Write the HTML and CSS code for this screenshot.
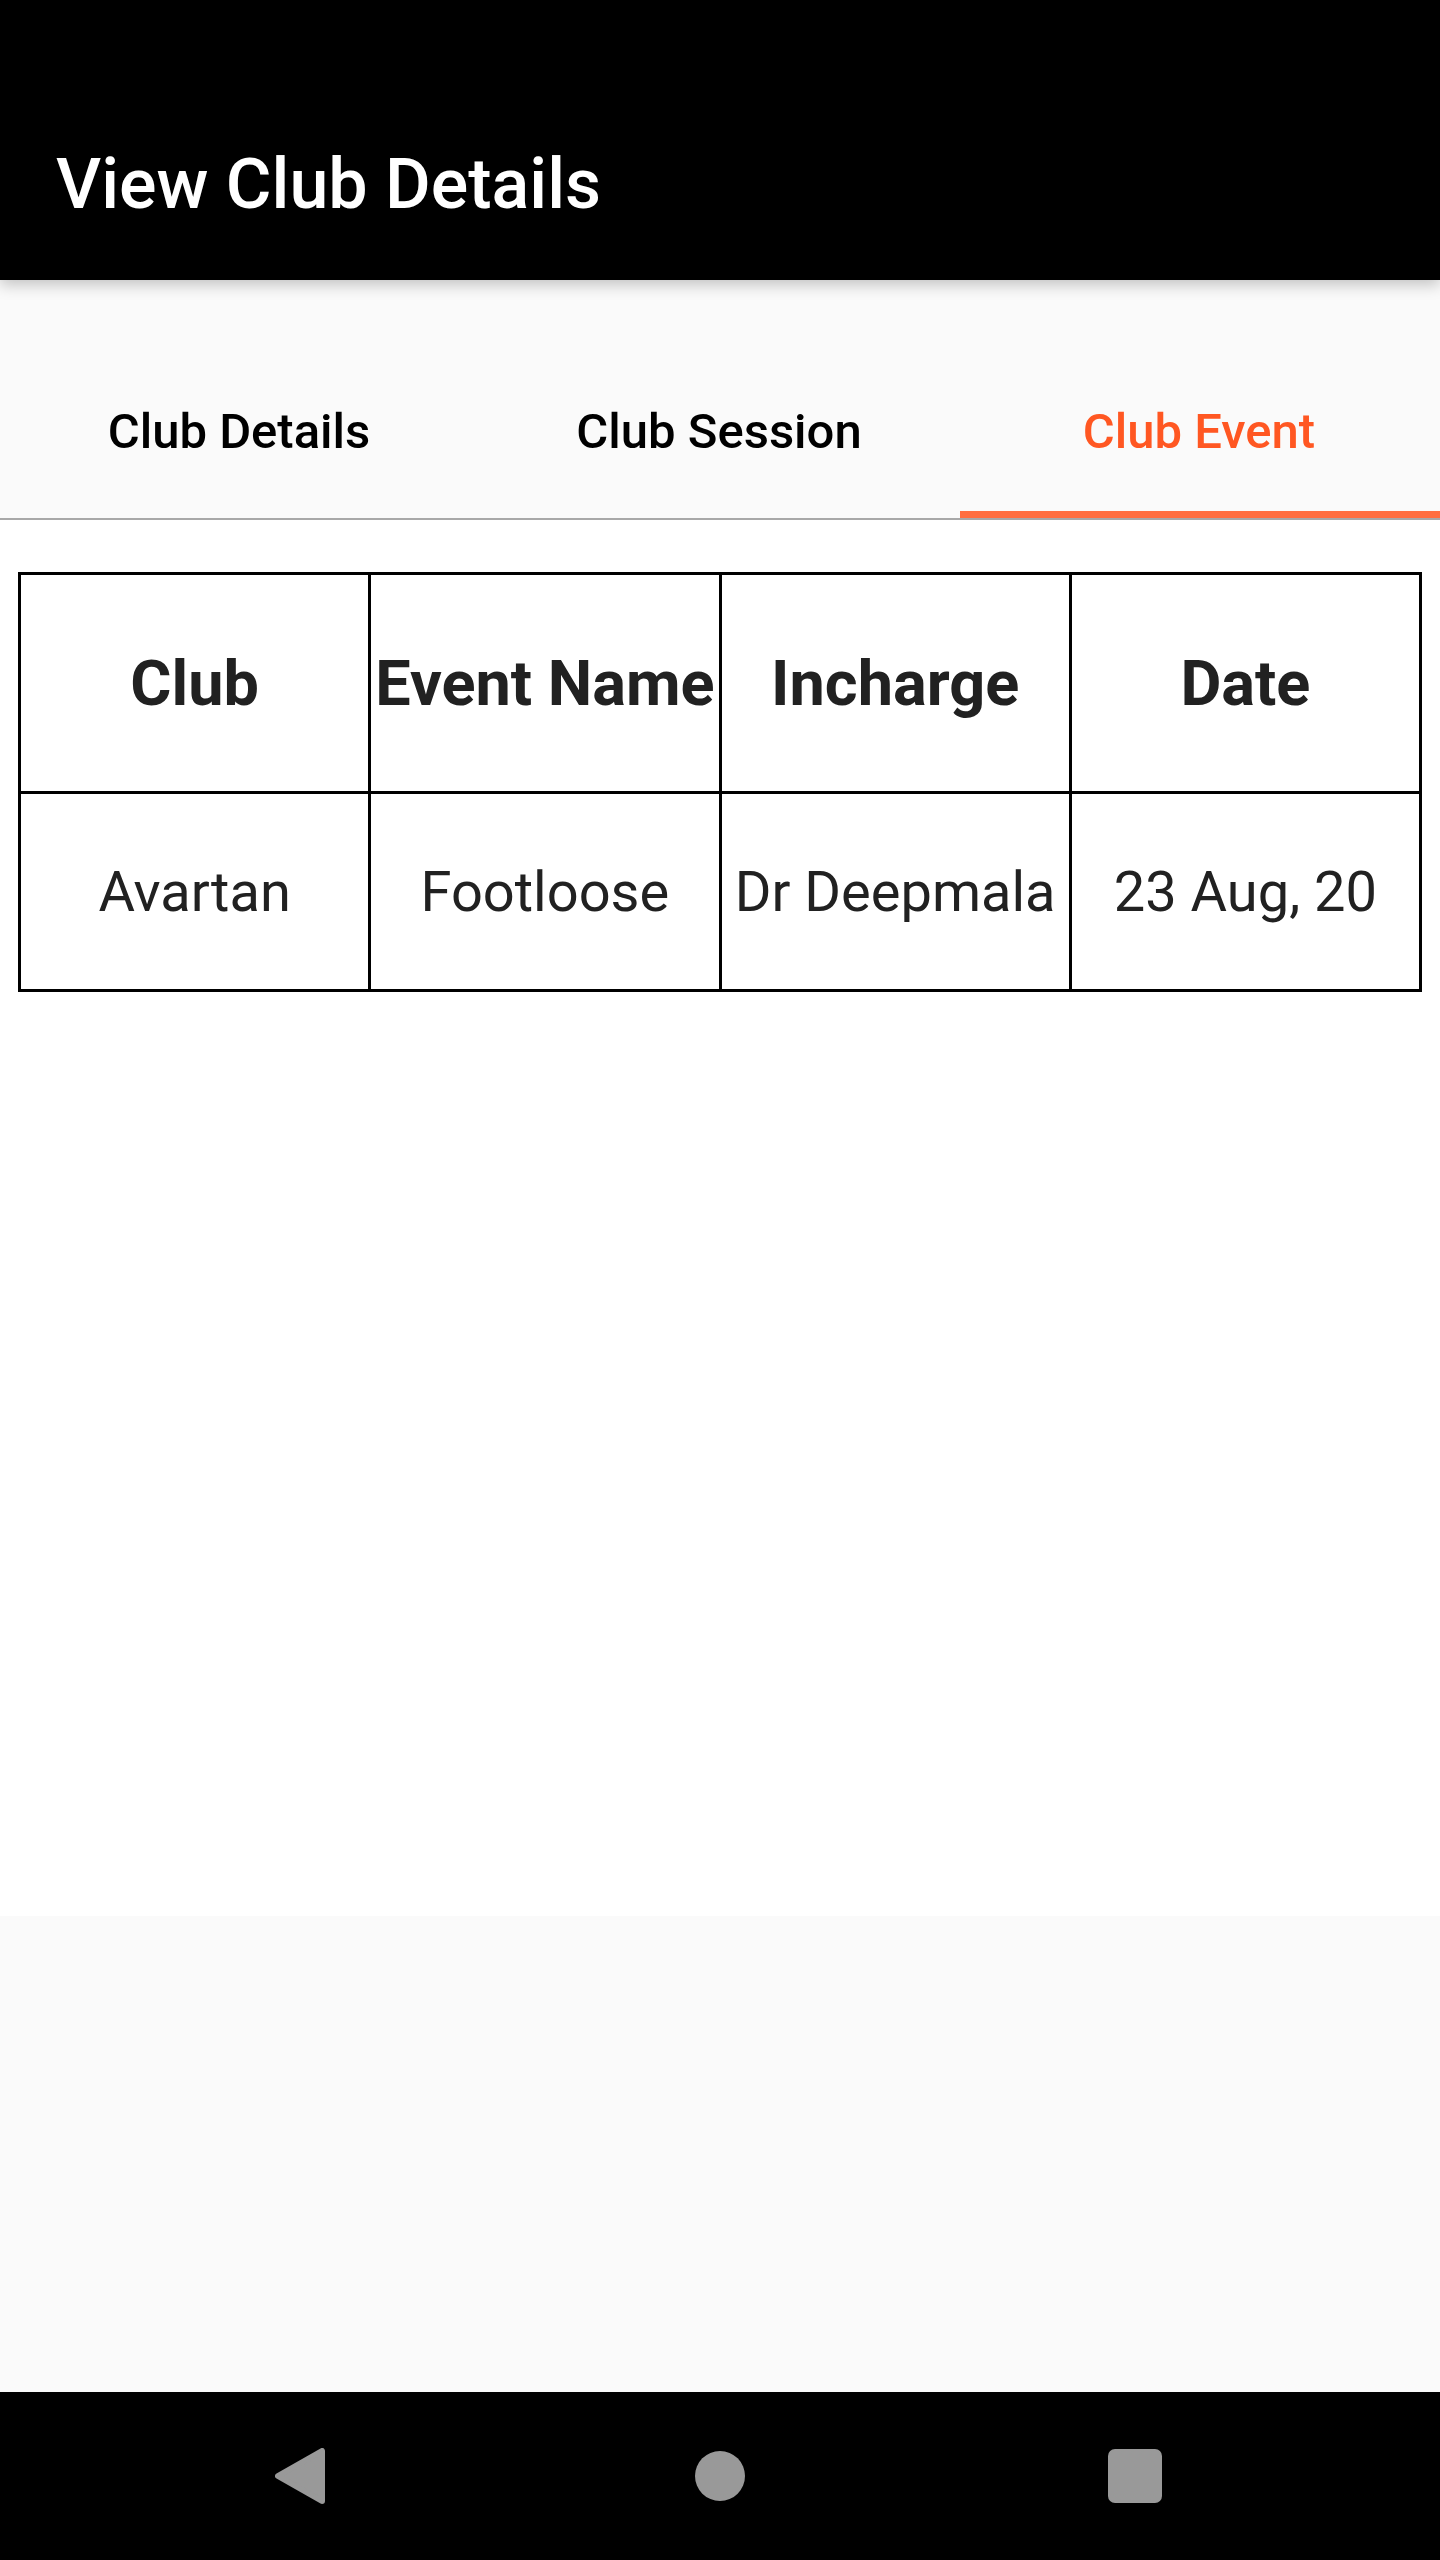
FILE: index.html
```html
<!DOCTYPE html>
<html lang="en">
<head>
<meta charset="utf-8">
<title>View Club Details</title>
<link rel="stylesheet" href="styles.css">
</head>
<body>
<div class="screen">
  <header class="appbar">
    <div class="statusbar"></div>
    <div class="toolbar"><h1 class="title">View Club Details</h1></div>
  </header>
  <nav class="tabs-wrap">
    <div class="tabbar">
      <div class="tab">Club Details</div>
      <div class="tab">Club Session</div>
      <div class="tab tab-active">Club Event</div>
    </div>
  </nav>
  <main class="content">
    <div class="grid-table" role="table">
      <div class="cell head" role="columnheader">Club</div>
      <div class="cell head" role="columnheader">Event Name</div>
      <div class="cell head" role="columnheader">Incharge</div>
      <div class="cell head" role="columnheader">Date</div>
      <div class="cell body" role="cell">Avartan</div>
      <div class="cell body" role="cell">Footloose</div>
      <div class="cell body" role="cell">Dr Deepmala</div>
      <div class="cell body" role="cell">23 Aug, 20</div>
    </div>
  </main>
  <div class="filler"></div>
  <footer class="navbar">
    <div class="navbtn">
      <svg width="50" height="56" viewBox="0 0 50 56"><path d="M47 3 L47 53 L3 28 Z" fill="#999999" stroke="#999999" stroke-width="6" stroke-linejoin="round"/></svg>
    </div>
    <div class="navbtn">
      <svg width="50" height="50" viewBox="0 0 50 50"><circle cx="25" cy="25" r="25" fill="#999999"/></svg>
    </div>
    <div class="navbtn">
      <svg width="54" height="54" viewBox="0 0 54 54"><rect x="0" y="0" width="54" height="54" rx="7" fill="#999999"/></svg>
    </div>
  </footer>
</div>
</body>
</html>
```

FILE: styles.css
```css
* { box-sizing: border-box; }
html, body { margin: 0; padding: 0; }
body {
  font-family: Roboto, "Noto Sans", "Liberation Sans", sans-serif;
  background: #fafafa;
}
.screen {
  width: 1440px;
  height: 2560px;
  display: flex;
  flex-direction: column;
  overflow: hidden;
}
.appbar {
  background: #000;
  height: 280px;
  flex: none;
  display: flex;
  flex-direction: column;
  position: relative;
  z-index: 2;
  box-shadow: 0 5px 14px rgba(0,0,0,0.22);
}
.statusbar { height: 84px; flex: none; }
.toolbar {
  height: 196px;
  display: flex;
  align-items: center;
  padding-left: 56px;
}
.title {
  margin: 0;
  color: #fff;
  font-size: 70px;
  font-weight: 500;
  line-height: 1;
  padding-top: 4px;
}
.tabs-wrap {
  flex: none;
  background: #fafafa;
  padding-top: 70px;
}
.tabbar {
  display: flex;
  height: 170px;
  border-bottom: 2px solid #a8a8a8;
}
.tab {
  flex: 1;
  display: flex;
  align-items: center;
  justify-content: center;
  font-size: 49px;
  font-weight: 500;
  color: #000;
  border-bottom: 7px solid transparent;
  padding-top: 2px;
  padding-right: 2px;
}
.tab-active {
  color: #ff5722;
  border-bottom-color: #ff6e40;
}
.content {
  flex: none;
  height: 1396px;
  background: #fff;
  padding: 52px 18px 0 18px;
}
.grid-table {
  width: 1404px;
  display: grid;
  grid-template-columns: repeat(4, 1fr);
  border-top: 3px solid #000;
  border-left: 3px solid #000;
}
.cell {
  border-right: 3px solid #000;
  border-bottom: 3px solid #000;
  display: flex;
  align-items: center;
  justify-content: center;
  color: #212121;
  white-space: nowrap;
  overflow: hidden;
}
.head {
  height: 219px;
  font-size: 63px;
  font-weight: 700;
}
.body {
  height: 198px;
  font-size: 56px;
  font-weight: 400;
}
.filler {
  flex: 1;
  background: #fafafa;
}
.navbar {
  flex: none;
  height: 168px;
  background: #000;
  display: grid;
  grid-template-columns: 420px 420px 410px;
  padding-left: 90px;
  align-items: center;
}
.navbtn {
  display: flex;
  justify-content: center;
  align-items: center;
}
.navbtn svg { display: block; }
```
